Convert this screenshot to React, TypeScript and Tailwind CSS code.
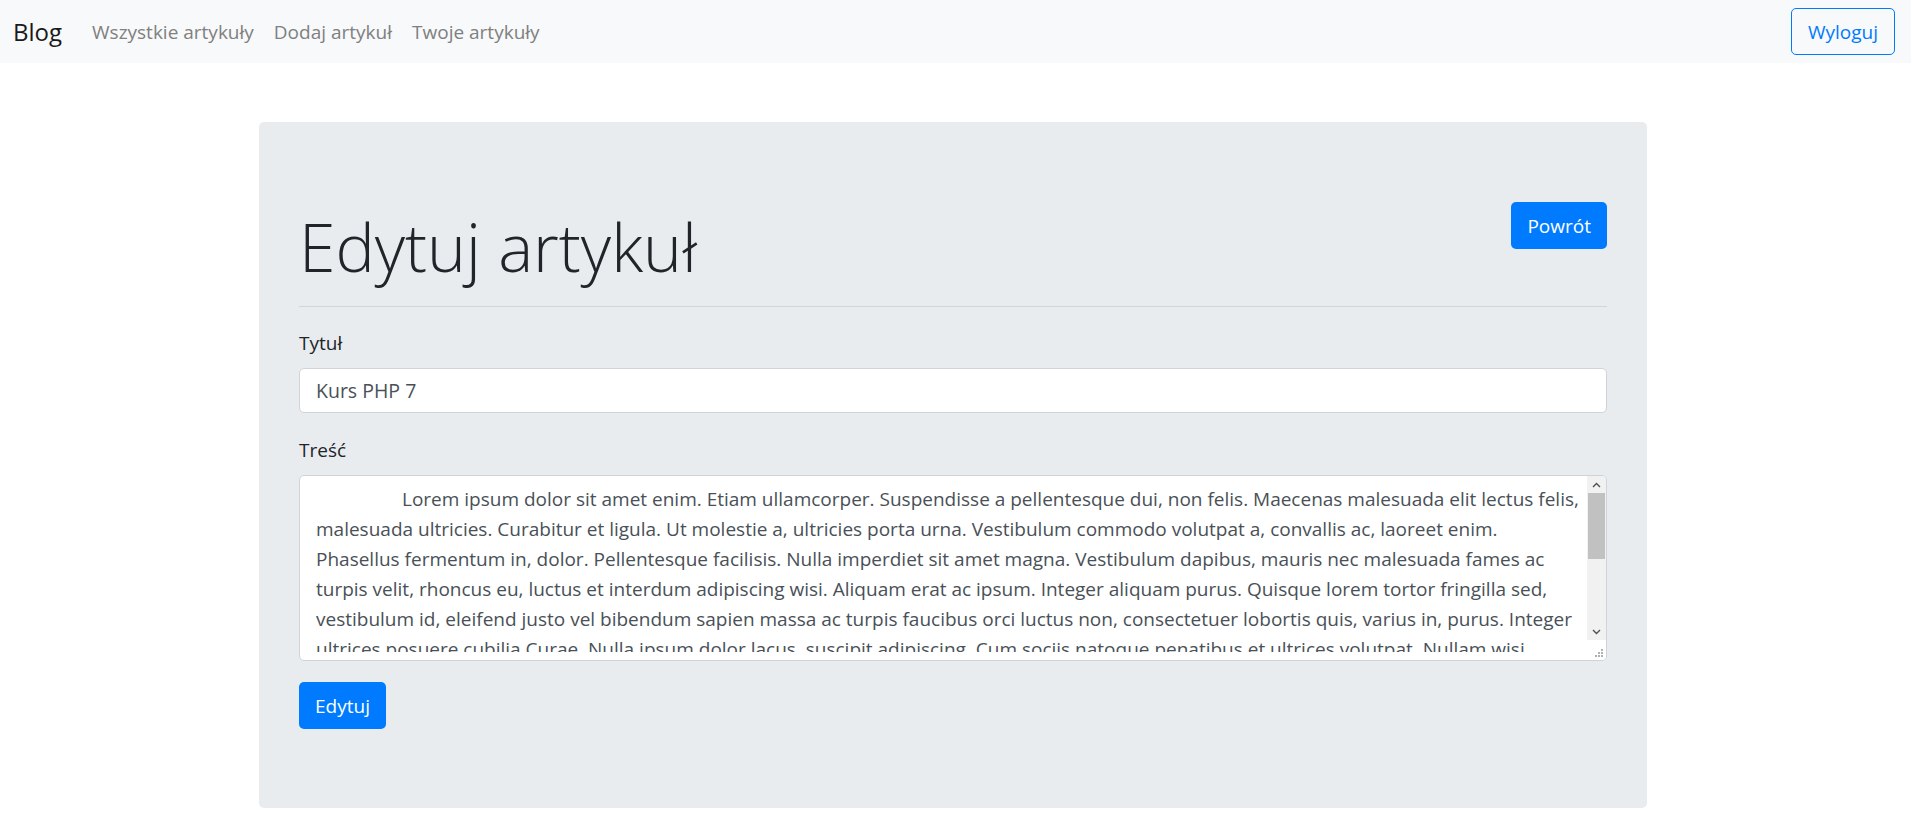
import * as React from "react";

const LINES = [
  "Lorem ipsum dolor sit amet enim. Etiam ullamcorper. Suspendisse a pellentesque dui, non felis. Maecenas malesuada elit lectus felis,",
  "malesuada ultricies. Curabitur et ligula. Ut molestie a, ultricies porta urna. Vestibulum commodo volutpat a, convallis ac, laoreet enim.",
  "Phasellus fermentum in, dolor. Pellentesque facilisis. Nulla imperdiet sit amet magna. Vestibulum dapibus, mauris nec malesuada fames ac",
  "turpis velit, rhoncus eu, luctus et interdum adipiscing wisi. Aliquam erat ac ipsum. Integer aliquam purus. Quisque lorem tortor fringilla sed,",
  "vestibulum id, eleifend justo vel bibendum sapien massa ac turpis faucibus orci luctus non, consectetuer lobortis quis, varius in, purus. Integer",
  "ultrices posuere cubilia Curae, Nulla ipsum dolor lacus, suscipit adipiscing. Cum sociis natoque penatibus et ultrices volutpat. Nullam wisi",
];

function Navbar() {
  return (
    <nav className="flex h-[63px] items-center justify-between bg-[#f8f9fa] pr-4 pl-[13px]">
      <div className="flex items-center">
        <a className="mr-5 text-[24px] leading-[30px] text-[#1a1a1a]">Blog</a>
        <ul className="flex text-[19px] leading-[30px] text-[#7f8080]">
          <li className="px-[10px] py-2">Wszystkie artykuły</li>
          <li className="px-[10px] py-2">Dodaj artykuł</li>
          <li className="px-[10px] py-2">Twoje artykuły</li>
        </ul>
      </div>
      <button className="h-[47px] rounded-[5px] border border-[#007bff] px-4 text-[19px] leading-[30px] text-[#007bff]">
        Wyloguj
      </button>
    </nav>
  );
}

function FakeTextarea() {
  return (
    <div className="relative flex h-[186px] overflow-hidden rounded-[5px] border border-[#ced4da] bg-white">
      <div className="min-w-0 flex-1 py-2 pr-[2px] pl-4 text-[19px] leading-[30px] text-[#495057]">
        <div className="h-full overflow-hidden">
          {LINES.map((l, i) => (
            <div key={i} className={i === 0 ? "whitespace-nowrap pl-[86px]" : "whitespace-nowrap"}>
              {l}
            </div>
          ))}
        </div>
      </div>
      <div className="flex w-[19px] shrink-0 flex-col">
        <div className="flex flex-1 flex-col bg-[#f1f1f1]">
          <div className="flex h-[17px] items-center justify-center">
            <svg width="9" height="6" viewBox="0 0 9 6" fill="none">
              <path d="M1 5 L4.5 1.5 L8 5" stroke="#505050" strokeWidth="1.4" />
            </svg>
          </div>
          <div className="mx-[1px] h-[66px] bg-[#c1c1c1]" />
          <div className="flex-1" />
          <div className="flex h-[17px] items-center justify-center">
            <svg width="9" height="6" viewBox="0 0 9 6" fill="none">
              <path d="M1 1 L4.5 4.5 L8 1" stroke="#505050" strokeWidth="1.4" />
            </svg>
          </div>
        </div>
        <div className="flex h-[20px] items-end justify-end bg-white p-[2px]">
          <svg width="10" height="10" viewBox="0 0 10 10">
            <rect x="7" y="1" width="2" height="2" fill="#b0b0b0" />
            <rect x="4" y="4" width="2" height="2" fill="#b0b0b0" />
            <rect x="7" y="4" width="2" height="2" fill="#b0b0b0" />
            <rect x="1" y="7" width="2" height="2" fill="#b0b0b0" />
            <rect x="4" y="7" width="2" height="2" fill="#b0b0b0" />
            <rect x="7" y="7" width="2" height="2" fill="#b0b0b0" />
          </svg>
        </div>
      </div>
    </div>
  );
}

export default function App() {
  return (
    <div className="min-h-screen bg-white font-['Open_Sans',sans-serif] text-[#212529]">
      <Navbar />
      <main className="pt-[59px]">
        <div className="ml-[259px] w-[1388px] rounded-[5px] bg-[#e9ecef] px-10 pt-[80px] pb-[79px]">
          <div className="flex items-start justify-between">
            <h1 className="pt-[3px] text-[66px] font-light leading-[83px]">Edytuj artykuł</h1>
            <button className="h-[47px] rounded-[5px] bg-[#007bff] px-4 text-[19px] leading-[30px] text-white">
              Powrót
            </button>
          </div>
          <hr className="mt-[18px] border-0 border-t border-[#d2d5d8]" />
          <label className="mt-[21px] block text-[19px] leading-[30px]">Tytuł</label>
          <div className="mt-[10px] flex h-[45px] items-center rounded-[5px] border border-[#ced4da] bg-white px-4 text-[19.5px] leading-[30px] text-[#495057]">
            Kurs PHP 7
          </div>
          <label className="mt-[22px] block text-[19px] leading-[30px]">Treść</label>
          <div className="mt-[10px]">
            <FakeTextarea />
          </div>
          <button className="mt-[21px] h-[47px] rounded-[5px] bg-[#007bff] px-4 text-[19px] leading-[30px] text-white">
            Edytuj
          </button>
        </div>
      </main>
    </div>
  );
}
